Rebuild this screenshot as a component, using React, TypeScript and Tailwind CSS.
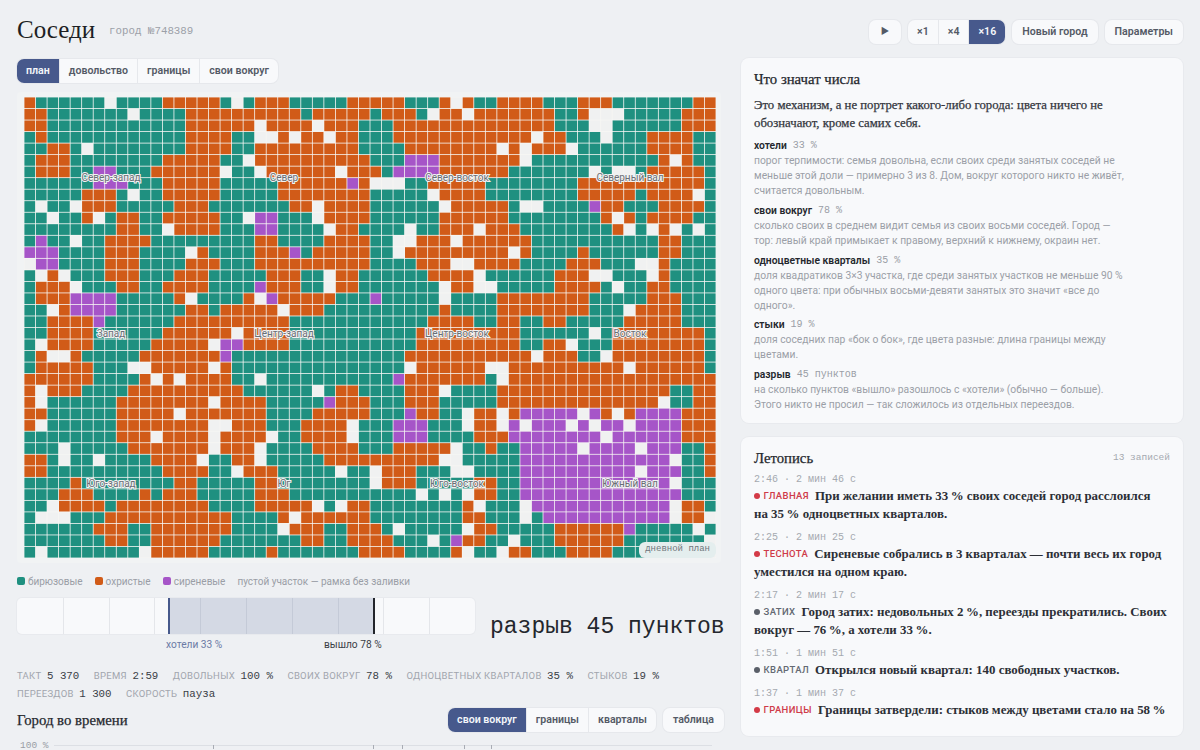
import React from "react";

const ROWS = [
  "O T6 . T4 O5 T . T O3 T5 O2 O3 T3 O . O T2 O4 T3 O3 T7 O2",
  "O2 T7 . T4 O10 T O5 T O3 T . O2 . O7 T2 O .3 T5 O3",
  "O2 T12 O6 . O4 . O3 T T2 O14 T3 .2 T6 O3",
  "T O T12 O4 T2 .2 O . O2 . O2 T T2 O12 . O2 T3 . T3 O4 T2",
  "T2 O2 T . T8 O4 T2 O9 T T3 O8 . O . O3 . T6 O4 T2",
  "T O3 T8 O5 T2 . O10 T3 P3 O7 . T11 O . O T2",
  "T O3 T2 P2 T3 O6 . T2 . O6 . O2 O T P4 O6 T7 . T .2 T O5 T",
  "T6 P3 T3 O5 T5 O6 P O .3 T2 O5 T8 O11 T",
  "T5 O3 T . T2 O5 T5 O8 T5 . O4 T8 O5 T O4 . T",
  "T . T2 . O3 T5 O3 T7 O2 . O4 T6 . O5 T .2 T4 P O2 T3 O4 T",
  "T2 . T2 O . T O2 T2 O5 T2 . P2 T3 . O4 T6 O6 T8 O . O T O4 T2",
  "T8 O2 T2 . O4 T3 P2 T4 . O2 T T3 . T2 O3 . O3 T8 O . T . O . T . T",
  "T P T2 . T2 O4 T9 O2 T4 O4 T2 .2 O3 . O6 T11 O2 T3",
  "P3 T4 O3 T4 . O T4 O3 P T O5 T2 . O9 . O T4 O T6 O2 T3",
  ". P2 T4 O3 T4 O3 T3 O10 T4 O3 .2 O4 T4 O3 T3 .2 O T4",
  "T . O . T3 O3 T3 O3 T5 O3 T2 . O2 T T5 O4 . T6 O3 .2 T3 . O T4",
  "T O3 . T3 O2 T2 O4 T4 P O3 T2 . O2 T T6 . O2 .2 T5 O4 T . T2 O2 T4",
  "T O3 P4 T5 O . T4 O . P O5 T3 P T5 . T4 O8 T5 O3 T3",
  "T2 . O P4 T6 O2 T O5 . O3 T4 T6 O T4 O8 T3 . O4 T3",
  "T2 O4 P T6 O10 T7 T5 O4 T2 O2 T2 O2 T5 O5 T3",
  "T2 O4 T6 O6 . O4 T7 T4 O9 T6 . T O8 T",
  "T . O4 T5 O5 . P2 O4 T7 T4 O9 T2 O2 . T3 O8 T",
  "T O .2 O T5 O7 P T12 T3 O11 . O3 T2 . O8 T",
  "T O5 T3 .2 O5 . O T12 T3 . O6 .2 O10 . O6 T",
  "O6 T4 O . O . O4 T2 . T9 T2 P O7 T . O18",
  "O . O3 T4 O10 T6 . T O2 T T3 O3 . T4 O15 T2 O2",
  "O . T6 O8 . O4 T5 P O3 T3 O3 T5 O14 . T2 O2",
  "O2 T6 O5 . O7 T4 O5 T3 P O2 T2 . O2 . O P5 . P O . O P4 O3",
  "O . T6 O8 .2 O3 T3 O4 . T T2 P3 T3 . O2 . P . P3 . P . P2 . P4 O3",
  "T8 O3 . O4 . O4 . T2 O4 . T T2 P3 T4 O3 P8 . P6 O3",
  "T3 . T5 O7 . O3 . T4 O4 T T2 O5 . T2 O T2 P5 . P4 . P3 T2 O",
  "O2 T . T2 . T4 O4 . T2 O2 . T5 O4 O6 .2 T5 P13 . T2 O",
  "O2 T10 O4 T2 . O3 T5 . T2 . O3 T3 .2 T4 P10 . P3 T2 O",
  "T4 O T8 O2 T5 O2 T8 . O3 T5 O2 T2 P13 . T3",
  "T3 O3 T4 O T O3 T5 O3 T7 T4 . T . T . O2 T2 P14 T3",
  "T2 . O4 T O8 T4 O5 . T . O2 T8 O . T3 . P12 . O2 T",
  "T .3 T3 O11 T4 O . O6 T8 O2 T3 . T P11 . O2 .",
  "T6 O3 T2 O7 T4 . O3 T2 O2 O T . T5 . O2 T5 O6 P T5 . T",
  "T7 O2 T2 O6 T7 O2 T2 O2 O2 T3 . T P O2 T2 . T3 O6 T7 .",
  "T . T8 . O5 T5 O T7 O O3 T4 O . T2 . O2 T3 O4 T8 .",
];

const GRID: string[] = ROWS.map((r) =>
  r.split(" ").map((tok) => tok[0].repeat(tok.length > 1 ? parseInt(tok.slice(1), 10) : 1)).join("")
);

const CELL: Record<string, string> = {
  T: "#1f9080",
  O: "#d15b18",
  P: "#a655c8",
  ".": "#f0f1f1",
};

const LABELS = [
  ["Север-запад", 111, 177],
  ["Север", 284, 177],
  ["Север-восток", 457, 177],
  ["Северный вал", 630, 177],
  ["Запад", 111, 333],
  ["Центр-запад", 284, 333],
  ["Центр-восток", 457, 333],
  ["Восток", 630, 333],
  ["Юго-запад", 111, 483],
  ["Юг", 284, 483],
  ["Юго-восток", 457, 483],
  ["Южный вал", 630, 483],
] as const;

const SANS = "font-['Roboto','Inter',sans-serif]";
const SERIF = "font-['Liberation_Serif','DejaVu_Serif',serif]";
const MONO = "font-['Liberation_Mono','DejaVu_Sans_Mono',monospace]";
const HEAD = SERIF + " text-[14.75px] leading-[20px] font-normal text-[#24272d] [-webkit-text-stroke:0.25px_#24272d]";

function Seg({ items, active }: { items: string[]; active: string }) {
  return (
    <div className="flex rounded-[7px] bg-[#f8f9fb] shadow-[0_0_0_1px_#e6e8ec]">
      {items.map((it, i) => (
        <div
          key={it}
          className={
            "h-6 flex items-center px-[9px] text-[10.6px] font-semibold whitespace-nowrap " +
            (i ? "border-l border-[#e6e8ec] " : "") +
            (i === 0 ? "rounded-l-[7px] " : "") +
            (i === items.length - 1 ? "rounded-r-[7px] " : "") +
            (it === active ? "bg-[#47598c] text-[#f4f6fa]" : "text-[#545a66]")
          }
        >
          {it}
        </div>
      ))}
    </div>
  );
}

function Btn({ children }: { children: React.ReactNode }) {
  return (
    <div className="h-6 flex items-center px-[10px] rounded-[7px] bg-[#f8f9fb] shadow-[0_0_0_1px_#e6e8ec] text-[10.6px] font-semibold text-[#545a66] whitespace-nowrap">
      {children}
    </div>
  );
}

function Stat({ k, v }: { k: string; v: string }) {
  return (
    <span className="inline-flex items-baseline gap-[5.5px] mr-[14.5px]">
      <span className={SANS + " text-[9.5px] uppercase tracking-[0.03em] text-[#a1a5ad]"}>{k}</span>
      <span className="text-[#3a3e46]">{v}</span>
    </span>
  );
}

function Term({ name, val, lines }: { name: string; val: string; lines: string[] }) {
  return (
    <div className="mb-[4.75px]">
      <div className="h-[15px] flex items-center gap-[6px] text-[10.3px] leading-[15px]">
        <span className="font-semibold text-[#24272d]">{name}</span>
        <span className={MONO + " text-[#9a9ea6] text-[10px] whitespace-pre"}>{val}</span>
      </div>
      {lines.map((l) => (
        <div key={l} className="text-[10.3px] leading-[15px] text-[#9b9fa7] whitespace-nowrap">
          {l}
        </div>
      ))}
    </div>
  );
}

function Entry({ time, tag, red, lines }: { time: string; tag: string; red?: boolean; lines: string[] }) {
  return (
    <div className="mb-[8px]">
      <div className={MONO + " text-[10px] leading-[14px] text-[#a5a9b0] whitespace-pre"}>{time}</div>
      <div className={SERIF + " text-[12.9px] leading-[18px] font-bold text-[#2c2f36]"}>
        <div className="flex items-center whitespace-nowrap">
          <span className={"w-[5.5px] h-[5.5px] shrink-0 rounded-full mr-[4px] " + (red ? "bg-[#d33a47]" : "bg-[#5a5f69]")} />
          <span className={SANS + " text-[9.5px] font-medium tracking-[0.04em] uppercase mr-[6px] " + (red ? "text-[#cf3b49]" : "text-[#646973]")}>{tag}</span>
          <span>{lines[0]}</span>
        </div>
        {lines[1] && <div className="whitespace-nowrap">{lines[1]}</div>}
      </div>
    </div>
  );
}

const PITCH_X = 692 / 60;
const PITCH_Y = 461 / 40;

export default function App() {
  return (
    <div className={SANS + " w-[1200px] h-[750px] overflow-hidden bg-[#eef0f3] flex items-start gap-[17px] px-[17px]"}>
      <div className="w-[707px] shrink-0 flex flex-col">
        <div className="h-[59px] flex items-center gap-[14px]">
          <h1 className={SERIF + " text-[25px] leading-none text-[#1d1f24] font-normal"}>Соседи</h1>
          <span className={MONO + " text-[10.8px] text-[#9ca0a8] mt-[3px]"}>город №748389</span>
        </div>
        <div className="flex">
          <Seg items={["план", "довольство", "границы", "свои вокруг"]} active="план" />
        </div>
        <div className="relative mt-[9px] w-[704px] h-[471px] rounded-[4px] bg-[#f1f3f4] pt-[5px] pl-[7px]">
          <svg width="692" height="461" className="block bg-[#f7f7f4]">
            {GRID.map((row, r) =>
              row.split("").map((c, i) => (
                <rect
                  key={r + "-" + i}
                  x={i * PITCH_X + 0.4}
                  y={r * PITCH_Y + 0.4}
                  width={PITCH_X - 0.8}
                  height={PITCH_Y - 0.8}
                  fill={CELL[c]}
                />
              ))
            )}
          </svg>
          {LABELS.map(([t, x, y]) => (
            <span
              key={t}
              className="absolute -translate-x-1/2 -translate-y-1/2 text-[10px] whitespace-nowrap text-[#6a6e75] [paint-order:stroke] [-webkit-text-stroke:2px_#f2f3f3]"
              style={{ left: x - 17, top: y - 92 }}
            >
              {t}
            </span>
          ))}
          <div className={MONO + " absolute right-[5px] bottom-[5px] h-[16px] px-[6px] flex items-center rounded-[6px] bg-[#e4eeee] text-[9px] text-[#6f767c] whitespace-pre"}>
            дневной план
          </div>
        </div>
        <div className="mt-[12px] h-[12px] flex items-center text-[10px] text-[#9a9ea6] whitespace-nowrap">
          <span className="w-[8px] h-[8px] rounded-[2px] bg-[#1f9080] mr-[3px]" />
          <span className="mr-[12px]">бирюзовые</span>
          <span className="w-[8px] h-[8px] rounded-[2px] bg-[#d15b18] mr-[3px]" />
          <span className="mr-[12px]">охристые</span>
          <span className="w-[8px] h-[8px] rounded-[2px] bg-[#a655c8] mr-[3px]" />
          <span className="mr-[12px]">сиреневые</span>
          <span>пустой участок — рамка без заливки</span>
        </div>
        <div className="mt-[11px] flex items-start">
          <div className="w-[458px] shrink-0">
            <div className="relative h-[36px] rounded-[5px] bg-[#f8f9fb] shadow-[0_0_0_1px_#e8eaee] grid grid-cols-10 overflow-hidden">
              {Array.from({ length: 10 }).map((_, i) => (
                <div key={i} className={i ? "border-l border-[#e4e6ea]" : ""} />
              ))}
              <div className="absolute left-[151px] w-[206px] top-0 bottom-0 bg-[#47598c]/20" />
              <div className="absolute left-[151px] w-[2px] top-0 bottom-0 bg-[#47598c]" />
              <div className="absolute left-[356px] w-[2px] top-0 bottom-0 bg-[#22252b]" />
            </div>
            <div className="relative h-[16px] mt-[3px] text-[10.2px] leading-[16px] whitespace-nowrap">
              <span className="absolute left-[149px] text-[#6b7aa5]">хотели 33 %</span>
              <span className="absolute left-[307px] text-[#3a3e46]">вышло 78 %</span>
            </div>
          </div>
          <div className={MONO + " ml-[15px] mt-[15px] text-[23px] leading-[28px] text-[#24272d] whitespace-pre"}>разрыв 45 пунктов</div>
        </div>
        <div className={MONO + " mt-[13.5px] text-[10.8px] leading-[17px] whitespace-nowrap"}>
          <Stat k="такт" v="5 370" />
          <Stat k="время" v="2:59" />
          <Stat k="довольных" v="100 %" />
          <Stat k="своих вокруг" v="78 %" />
          <Stat k="одноцветных кварталов" v="35 %" />
          <Stat k="стыков" v="19 %" />
          <br />
          <Stat k="переездов" v="1 300" />
          <Stat k="скорость" v="пауза" />
        </div>
        <div className="mt-[5.5px] flex items-center justify-between">
          <h2 className={HEAD}>Город во времени</h2>
          <div className="flex gap-[7px]">
            <Seg items={["свои вокруг", "границы", "кварталы"]} active="свои вокруг" />
            <Btn>таблица</Btn>
          </div>
        </div>
        <div className="relative mt-[8px] h-[12px]">
          <span className={MONO + " absolute left-[3px] top-0 text-[9.5px] leading-[12px] text-[#9a9ea6]"}>100 %</span>
          <svg className="absolute left-0 top-0" width="707" height="12">
            <line x1="37" y1="5.5" x2="695" y2="5.5" stroke="#dcdfe4" />
            {[196, 356, 385, 447, 474].map((x) => (
              <line key={x} x1={x + 0.5} y1="5" x2={x + 0.5} y2="9" stroke="#a8acb4" />
            ))}
          </svg>
        </div>
      </div>

      <div className="w-[442px] shrink-0 flex flex-col pt-[20px]">
        <div className="flex justify-end gap-[7px] h-[24px] mb-[14px]">
          <Btn><span className="text-[9px] px-[2px]">▶</span></Btn>
          <Seg items={["×1", "×4", "×16"]} active="×16" />
          <Btn>Новый город</Btn>
          <Btn>Параметры</Btn>
        </div>
        <div className="h-[365px] rounded-[8px] bg-[#f8f9fb] shadow-[0_0_0_1px_#e8eaee] px-[13px] pt-[11px]">
          <h2 className={HEAD}>Что значат числа</h2>
          <p className={SERIF + " mt-[7px] text-[12.75px] leading-[18px] text-[#33363d] [-webkit-text-stroke:0.25px_#33363d] whitespace-nowrap mb-[6px]"}>
            Это механизм, а не портрет какого-либо города: цвета ничего не<br />обозначают, кроме самих себя.
          </p>
          <Term name="хотели" val="33 %" lines={["порог терпимости: семья довольна, если своих среди занятых соседей не", "меньше этой доли — примерно 3 из 8. Дом, вокруг которого никто не живёт,", "считается довольным."]} />
          <Term name="свои вокруг" val="78 %" lines={["сколько своих в среднем видит семья из своих восьми соседей. Город —", "тор: левый край примыкает к правому, верхний к нижнему, окраин нет."]} />
          <Term name="одноцветные кварталы" val="35 %" lines={["доля квадратиков 3×3 участка, где среди занятых участков не меньше 90 %", "одного цвета: при обычных восьми-девяти занятых это значит «все до", "одного»."]} />
          <Term name="стыки" val="19 %" lines={["доля соседних пар «бок о бок», где цвета разные: длина границы между", "цветами."]} />
          <Term name="разрыв" val="45 пунктов" lines={["на сколько пунктов «вышло» разошлось с «хотели» (обычно — больше).", "Этого никто не просил — так сложилось из отдельных переездов."]} />
        </div>
        <div className="mt-[14px] h-[299px] rounded-[8px] bg-[#f8f9fb] shadow-[0_0_0_1px_#e8eaee] px-[13px] pt-[11px]">
          <div className="flex items-center justify-between h-[20px] mb-[5px]">
            <h2 className={HEAD}>Летопись</h2>
            <span className={MONO + " text-[9.5px] text-[#a5a9b0] whitespace-pre"}>13 записей</span>
          </div>
          <Entry time="2:46 · 2 мин 46 с" tag="главная" red lines={["При желании иметь 33\u2009% своих соседей город расслоился", "на 35\u2009% одноцветных кварталов."]} />
          <Entry time="2:25 · 2 мин 25 с" tag="теснота" red lines={["Сиреневые собрались в 3 кварталах — почти весь их город", "уместился на одном краю."]} />
          <Entry time="2:17 · 2 мин 17 с" tag="затих" lines={["Город затих: недовольных 2\u2009%, переезды прекратились. Своих", "вокруг — 76\u2009%, а хотели 33\u2009%."]} />
          <Entry time="1:51 · 1 мин 51 с" tag="квартал" lines={["Открылся новый квартал: 140 свободных участков."]} />
          <Entry time="1:37 · 1 мин 37 с" tag="границы" red lines={["Границы затвердели: стыков между цветами стало на 58\u2009%"]} />
        </div>
      </div>
    </div>
  );
}
